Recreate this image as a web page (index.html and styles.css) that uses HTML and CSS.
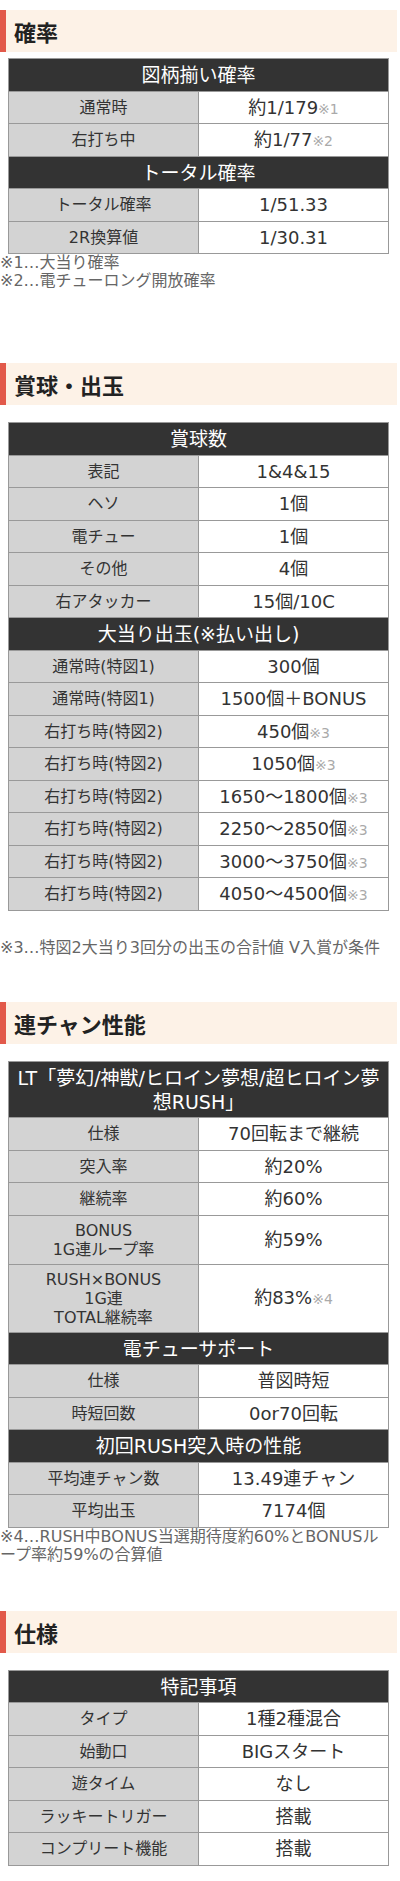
FILE: index.html
```html
<!DOCTYPE html>
<html lang="ja">
<head>
<meta charset="utf-8">
<title>スペック</title>
<link rel="stylesheet" href="styles.css">
</head>
<body>
<section class="sec sec-1">
  <h2 class="ttl">確率</h2>
  <table class="spec">
    <tr><th colspan="2">図柄揃い確率</th></tr>
    <tr><td class="k">通常時</td><td class="v">約1/179<span class="mk">※1</span></td></tr>
    <tr><td class="k">右打ち中</td><td class="v">約1/77<span class="mk">※2</span></td></tr>
    <tr><th colspan="2">トータル確率</th></tr>
    <tr><td class="k">トータル確率</td><td class="v">1/51.33</td></tr>
    <tr><td class="k">2R換算値</td><td class="v">1/30.31</td></tr>
  </table>
  <div class="note">※1…大当り確率<br>※2…電チューロング開放確率</div>
</section>

<section class="sec sec-2">
  <h2 class="ttl">賞球・出玉</h2>
  <table class="spec">
    <tr><th colspan="2">賞球数</th></tr>
    <tr><td class="k">表記</td><td class="v">1&amp;4&amp;15</td></tr>
    <tr><td class="k">ヘソ</td><td class="v">1個</td></tr>
    <tr><td class="k">電チュー</td><td class="v">1個</td></tr>
    <tr><td class="k">その他</td><td class="v">4個</td></tr>
    <tr><td class="k">右アタッカー</td><td class="v">15個/10C</td></tr>
    <tr><th colspan="2">大当り出玉(※払い出し)</th></tr>
    <tr><td class="k">通常時(特図1)</td><td class="v">300個</td></tr>
    <tr><td class="k">通常時(特図1)</td><td class="v">1500個＋BONUS</td></tr>
    <tr><td class="k">右打ち時(特図2)</td><td class="v">450個<span class="mk">※3</span></td></tr>
    <tr><td class="k">右打ち時(特図2)</td><td class="v">1050個<span class="mk">※3</span></td></tr>
    <tr><td class="k">右打ち時(特図2)</td><td class="v">1650～1800個<span class="mk">※3</span></td></tr>
    <tr><td class="k">右打ち時(特図2)</td><td class="v">2250～2850個<span class="mk">※3</span></td></tr>
    <tr><td class="k">右打ち時(特図2)</td><td class="v">3000～3750個<span class="mk">※3</span></td></tr>
    <tr><td class="k">右打ち時(特図2)</td><td class="v">4050～4500個<span class="mk">※3</span></td></tr>
  </table>
  <div class="note note-gap">※3…特図2大当り3回分の出玉の合計値 V入賞が条件</div>
</section>

<section class="sec sec-3">
  <h2 class="ttl">連チャン性能</h2>
  <table class="spec">
    <tr><th colspan="2">LT「夢幻/神獣/ヒロイン夢想/超ヒロイン夢想RUSH」</th></tr>
    <tr><td class="k">仕様</td><td class="v">70回転まで継続</td></tr>
    <tr><td class="k">突入率</td><td class="v">約20%</td></tr>
    <tr><td class="k">継続率</td><td class="v">約60%</td></tr>
    <tr><td class="k">BONUS<br>1G連ループ率</td><td class="v">約59%</td></tr>
    <tr><td class="k">RUSH×BONUS<br>1G連<br>TOTAL継続率</td><td class="v">約83%<span class="mk">※4</span></td></tr>
    <tr><th colspan="2">電チューサポート</th></tr>
    <tr><td class="k">仕様</td><td class="v">普図時短</td></tr>
    <tr><td class="k">時短回数</td><td class="v">0or70回転</td></tr>
    <tr><th colspan="2">初回RUSH突入時の性能</th></tr>
    <tr><td class="k">平均連チャン数</td><td class="v">13.49連チャン</td></tr>
    <tr><td class="k">平均出玉</td><td class="v">7174個</td></tr>
  </table>
  <div class="note">※4…RUSH中BONUS当選期待度約60%とBONUSループ率約59%の合算値</div>
</section>

<section class="sec sec-4">
  <h2 class="ttl">仕様</h2>
  <table class="spec">
    <tr><th colspan="2">特記事項</th></tr>
    <tr><td class="k">タイプ</td><td class="v">1種2種混合</td></tr>
    <tr><td class="k">始動口</td><td class="v">BIGスタート</td></tr>
    <tr><td class="k">遊タイム</td><td class="v">なし</td></tr>
    <tr><td class="k">ラッキートリガー</td><td class="v">搭載</td></tr>
    <tr><td class="k">コンプリート機能</td><td class="v">搭載</td></tr>
  </table>
</section>
</body>
</html>
```
FILE: styles.css
```css
html, body {
  margin: 0;
  padding: 0;
  background: #ffffff;
}
body {
  font-family: "DejaVu Sans", "Noto Sans CJK JP", sans-serif;
  color: #333333;
  padding-bottom: 22px;
}
.ttl {
  margin: 0 3px 17px 0;
  height: 42px;
  line-height: 42px;
  padding: 0 0 0 8px;
  border-left: 6px solid #e2594a;
  background: #fdf2e7;
  font-family: "Noto Sans CJK JP", sans-serif;
  font-size: 22px;
  font-weight: 700;
  color: #222222;
}
.sec-1 .ttl { margin-top: 10px; margin-bottom: 6px; }
.sec-2 .ttl { margin-top: 73px; }
.sec-3 .ttl { margin-top: 45px; }
.sec-4 .ttl { margin-top: 47px; }

.spec {
  width: 381px;
  margin: 0 0 0 8px;
  border-collapse: collapse;
  border: 1px solid #999999;
  table-layout: fixed;
}
.spec th {
  background: #333333;
  color: #ffffff;
  font-weight: 400;
  font-size: 19px;
  line-height: 24px;
  padding: 4px 4px 3.5px;
  border: 1px solid #999999;
  text-align: center;
}
.spec td {
  border: 1px solid #999999;
  text-align: center;
  vertical-align: middle;
  padding: 5px 4px;
}
.spec .k {
  width: 40%;
  background: #d3d3d3;
  font-size: 16px;
  line-height: 19px;
}
.spec .v {
  background: #ffffff;
  font-size: 18px;
  line-height: 21.5px;
}
.mk {
  color: #aaaaaa;
  font-size: 14px;
  line-height: 0;
}
.note {
  font-size: 16px;
  line-height: 18px;
  color: #666666;
  width: 392px;
}
.note-gap {
  margin-top: 28px;
}
```
